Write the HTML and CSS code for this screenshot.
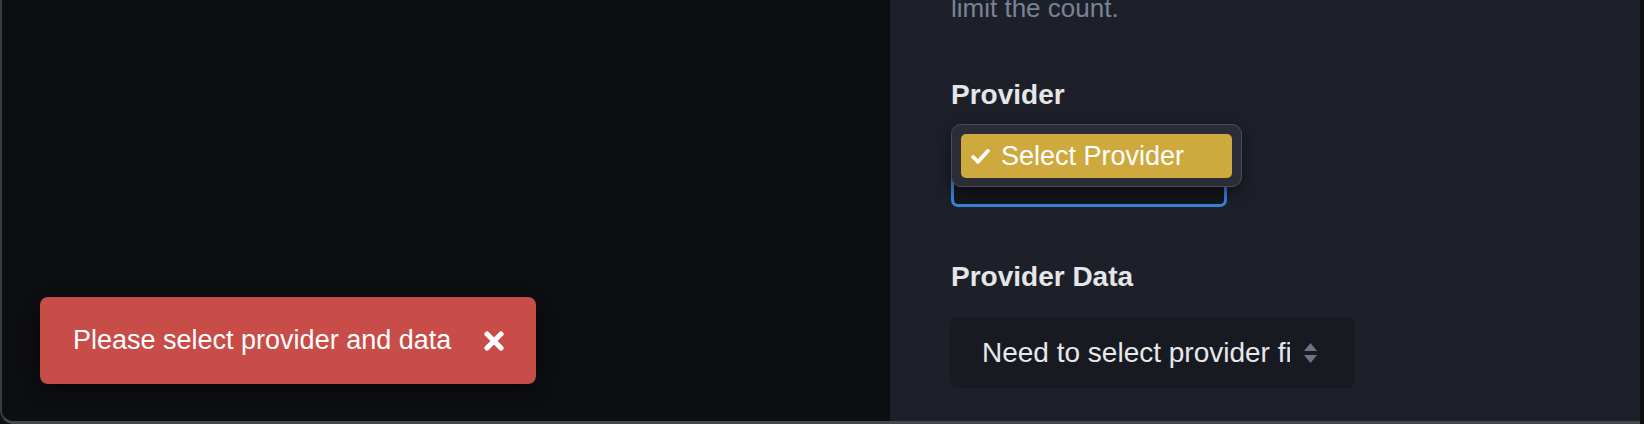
FILE: index.html
```html
<!DOCTYPE html>
<html lang="en">
<head>
    <meta charset="UTF-8">
    <meta name="viewport" content="width=device-width, initial-scale=1.0">
    <title>Provider settings</title>
    <link rel="stylesheet" href="styles.css">
</head>
<body>
    <div class="window">
        <div class="preview">
            <div class="toast">
                <span class="toast-text">Please select provider and data</span>
                <button class="toast-close" type="button">
                    <svg viewBox="0 0 22 20" width="22" height="20">
                        <path d="M4 3 L18 17 M18 3 L4 17" stroke="#fff" stroke-width="5.2" stroke-linecap="round" fill="none"/>
                    </svg>
                </button>
            </div>
        </div>

        <div class="settings">
            <p class="desc">limit the count.</p>

            <div class="field">
                <h3 class="label">Provider</h3>
                <div class="select-wrap">
                    <div class="select focused"></div>
                    <!-- open native menu -->
                    <div class="menu">
                        <div class="menu-item">
                            <svg class="check" viewBox="0 0 19 15" width="19" height="15">
                                <path d="M2.2 8 L7 12.8 L16.8 2" stroke="#fff" stroke-width="3.8" stroke-linecap="round" stroke-linejoin="round" fill="none"/>
                            </svg>
                            Select Provider
                        </div>
                    </div>
                </div>
            </div>

            <div class="field">
                <h3 class="label">Provider Data</h3>
                <div class="select data">
                    <span class="select-text">Need to select provider first</span>
                    <svg class="arrows" viewBox="0 0 15 20" width="15" height="20">
                        <path d="M7.5 0 L14 8 L1 8 Z M7.5 20 L14 12 L1 12 Z" fill="#6c7588"/>
                    </svg>
                </div>
            </div>
        </div>
    </div>
</body>
</html>
```

FILE: styles.css
```css
body {
    margin: 0;
    width: 1644px;
    height: 424px;
    overflow: hidden;
    background: #0e0f12;
    font-family: "Liberation Sans", Arial, sans-serif;
}

.window {
    display: flex;
    width: 1640px;
    height: 424px;
    box-sizing: border-box;
    border-left: 2px solid #3b3c40;
    border-bottom: 3px solid #46474b;
    border-bottom-left-radius: 14px;
    overflow: hidden;
}

.preview {
    width: 888px;
    background: #0d0e11;
    display: flex;
    align-items: flex-end;
    padding: 0 0 37px 38px;
    box-sizing: border-box;
}

.toast {
    display: flex;
    align-items: center;
    gap: 32px;
    height: 87px;
    padding: 0 31px 0 33px;
    box-sizing: border-box;
    background: #c84c47;
    border-radius: 8px;
    box-shadow: 0 6px 18px rgba(0, 0, 0, 0.45);
    color: #fff;
    font-size: 27px;

    .toast-close {
        display: flex;
        padding: 0;
        border: 0;
        background: none;
    }
}

.settings {
    flex: 1;
    background: #1d2029;
    padding-left: 61px;
    color: #e4e5e7;
}

.desc {
    margin: -8px 0 0;
    font-size: 26px;
    line-height: 32px;
    color: #798396;
}

.field {
    margin-top: 54px;

    & + .field {
        margin-top: 53px;
    }
}

.label {
    margin: 0 0 23px;
    font-size: 28px;
    line-height: 34px;
    font-weight: bold;
    color: #e6e6e8;
}

.select-wrap {
    position: relative;
    width: 276px;
}

.select {
    height: 72px;
    box-sizing: border-box;
    border-radius: 8px;
    background: #15171c;

    &.focused {
        border: 3px solid #3a84dc;
        border-radius: 7px;
    }

    &.data {
        width: 405px;
        height: 71px;
        margin-left: -1px;
        display: flex;
        align-items: center;
        gap: 13px;
        padding-left: 32px;
        background: #171a21;
        font-size: 28px;
        color: #e8e8ea;
    }
}

.select-text {
    width: 308px;
    overflow: hidden;
    white-space: nowrap;
}

.menu {
    position: absolute;
    top: -11px;
    left: 0;
    width: 291px;
    height: 63px;
    box-sizing: border-box;
    padding: 9px 9px 8px 9px;
    background: #2a2d35;
    border: 1px solid #4b4e56;
    border-radius: 10px;
    box-shadow: 0 6px 16px rgba(0, 0, 0, 0.5);
}

.menu-item {
    display: flex;
    align-items: center;
    gap: 11px;
    height: 44px;
    padding-left: 10px;
    background: #cea93e;
    border-radius: 5px;
    color: #fff;
    font-size: 27px;
}
```
